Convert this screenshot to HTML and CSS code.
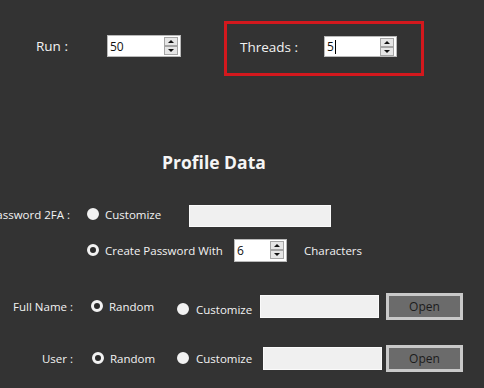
FILE: index.html
```html
<!DOCTYPE html>
<html lang="en">

<head>
  <meta charset="UTF-8">
  <title>Profile Data</title>
  <link rel="stylesheet" href="styles.css">
</head>

<body>
  <div class="form">
    <div class="top">
      <div class="run">
        <span class="label run-label">Run :</span>
        <div class="spin spin-run">
          <span class="spin-value">50</span>
          <div class="spin-btns">
            <span class="spin-btn up"></span>
            <span class="spin-btn down"></span>
          </div>
        </div>
      </div>
      <div class="threads">
        <span class="label threads-label">Threads :</span>
        <div class="spin spin-threads">
          <span class="spin-value">5<i class="caret"></i></span>
          <div class="spin-btns">
            <span class="spin-btn up"></span>
            <span class="spin-btn down"></span>
          </div>
        </div>
      </div>
    </div>

    <h2 class="title">Profile Data</h2>

    <div class="row row-pw1">
      <div class="cell cell-pw">Password 2FA :</div>
      <span class="radio checked"></span>
      <span class="opt opt-custom1">Customize</span>
      <div class="textbox tb-pw"></div>
    </div>

    <div class="row row-pw2">
      <div class="cell cell-pw"></div>
      <span class="radio"></span>
      <span class="opt opt-create">Create Password With</span>
      <div class="spin spin-chars">
        <span class="spin-value">6</span>
        <div class="spin-btns">
          <span class="spin-btn up"></span>
          <span class="spin-btn down"></span>
        </div>
      </div>
      <span class="opt chars">Characters</span>
    </div>

    <div class="row row-name">
      <div class="cell cell-name">Full Name :</div>
      <span class="radio ring-name"></span>
      <span class="opt opt-random">Random</span>
      <span class="radio checked low"></span>
      <span class="opt opt-custom2 low">Customize</span>
      <div class="textbox tb-name"></div>
      <button class="open-btn">Open</button>
    </div>

    <div class="row row-user">
      <div class="cell cell-name">User :</div>
      <span class="radio ring-user"></span>
      <span class="opt opt-random user-random">Random</span>
      <span class="radio checked"></span>
      <span class="opt opt-custom2 user-custom">Customize</span>
      <div class="textbox tb-user"></div>
      <button class="open-btn open-user">Open</button>
    </div>
  </div>
</body>

</html>
```

FILE: styles.css
```css
* {
  box-sizing: border-box;
  font-family: "Open Sans", "Noto Sans", sans-serif;
}

body {
  margin: 0;
  width: 484px;
  height: 388px;
  overflow: hidden;
  background-color: #333333;
  color: #f2f2f2;
}

.form {
  display: flex;
  flex-direction: column;
}

/* top bar: run + threads */
.top {
  display: flex;
  align-items: flex-start;
  padding: 21px 0 0 36px;
}

.run {
  display: flex;
  align-items: center;
  margin-top: 14px;
}

.label {
  font-size: 13.5px;
}

.run-label {
  width: 71px;
}

.threads {
  display: flex;
  align-items: flex-start;
  width: 200px;
  height: 55px;
  margin-left: 43px;
  padding: 12px 0 0 13px;
  border: 3px solid #d3181d;
}

.threads-label {
  width: 84px;
  line-height: 21px;
  margin-top: 1px;
}

/* numeric spin box */
.spin {
  display: flex;
  align-items: center;
  justify-content: space-between;
  height: 22px;
  background-color: #ffffff;
  border: 1px solid #b9b9b9;
  color: #111111;
  padding: 0 1px 0 2px;
}

.spin-run {
  width: 74px;
}

.spin-threads {
  width: 73px;
  height: 21px;
}

.spin-chars {
  width: 53px;
  height: 23px;
}

.spin-value {
  font-size: 12px;
  display: flex;
  align-items: center;
}

.caret {
  display: inline-block;
  width: 1px;
  height: 14px;
  background-color: #000000;
  margin-left: 1px;
}

.spin-btns {
  display: flex;
  flex-direction: column;
  margin-right: 1px;
}

.spin-btn {
  position: relative;
  width: 14px;
  height: 9px;
  background-color: #e6e6e6;
  border: 1px solid #a5a5a5;
}

.spin-btn::after {
  content: "";
  position: absolute;
  left: 3px;
  border-left: 3px solid transparent;
  border-right: 3px solid transparent;
}

.spin-btn.up::after {
  top: 2px;
  border-bottom: 3px solid #111111;
}

.spin-btn.down::after {
  top: 2px;
  border-top: 3px solid #111111;
}

/* profile section */
.title {
  margin: 74px 0 0 162px;
  font-size: 17.5px;
  line-height: 24px;
  font-weight: bold;
  color: #f5f5f5;
}

.row {
  display: flex;
  align-items: center;
  height: 30px;
  font-size: 11.5px;
}

.row-pw1 {
  margin-top: 25px;
}

.row-pw2 {
  margin-top: 6px;
}

.row-name {
  margin-top: 26px;
}

.row-user {
  margin-top: 22px;
}

.cell {
  display: flex;
  justify-content: flex-end;
  white-space: nowrap;
  flex-shrink: 0;
}

.cell-pw {
  width: 70px;
  margin-right: 17px;
}

.cell-name {
  width: 73px;
}

.radio {
  flex-shrink: 0;
  width: 12px;
  height: 12px;
  border-radius: 50%;
  border: 3px solid #f2f2f2;
  background-color: #2b2b2b;
}

.radio.checked {
  background-color: #f2f2f2;
}

.ring-name {
  margin-left: 18px;
}

.ring-user {
  margin-left: 19px;
}

.low {
  margin-top: 6px;
}

.opt {
  margin-left: 6px;
  white-space: nowrap;
  flex-shrink: 0;
}

.opt-custom1 {
  width: 84px;
}

.opt-create {
  width: 129px;
}

.chars {
  margin-left: 17px;
}

.opt-random {
  width: 68px;
}

.user-random {
  width: 67px;
}

.opt-custom2 {
  margin-left: 7px;
  width: 64px;
}

.user-custom {
  width: 67px;
}

.textbox {
  flex-shrink: 0;
  height: 22px;
  background-color: #f0f0f0;
  border: 1px solid #fafafa;
}

.tb-pw {
  width: 142px;
  margin-top: 4px;
}

.tb-name {
  width: 119px;
  height: 23px;
}

.tb-user {
  width: 119px;
  height: 23px;
}

.open-btn {
  flex-shrink: 0;
  width: 77px;
  height: 27px;
  margin-left: 7px;
  padding: 0;
  background-color: #6b6b6b;
  border: 3px solid #c9c9c9;
  color: #1c1c1c;
  font-size: 12px;
}

.open-user {
  margin-left: 4px;
}
```
